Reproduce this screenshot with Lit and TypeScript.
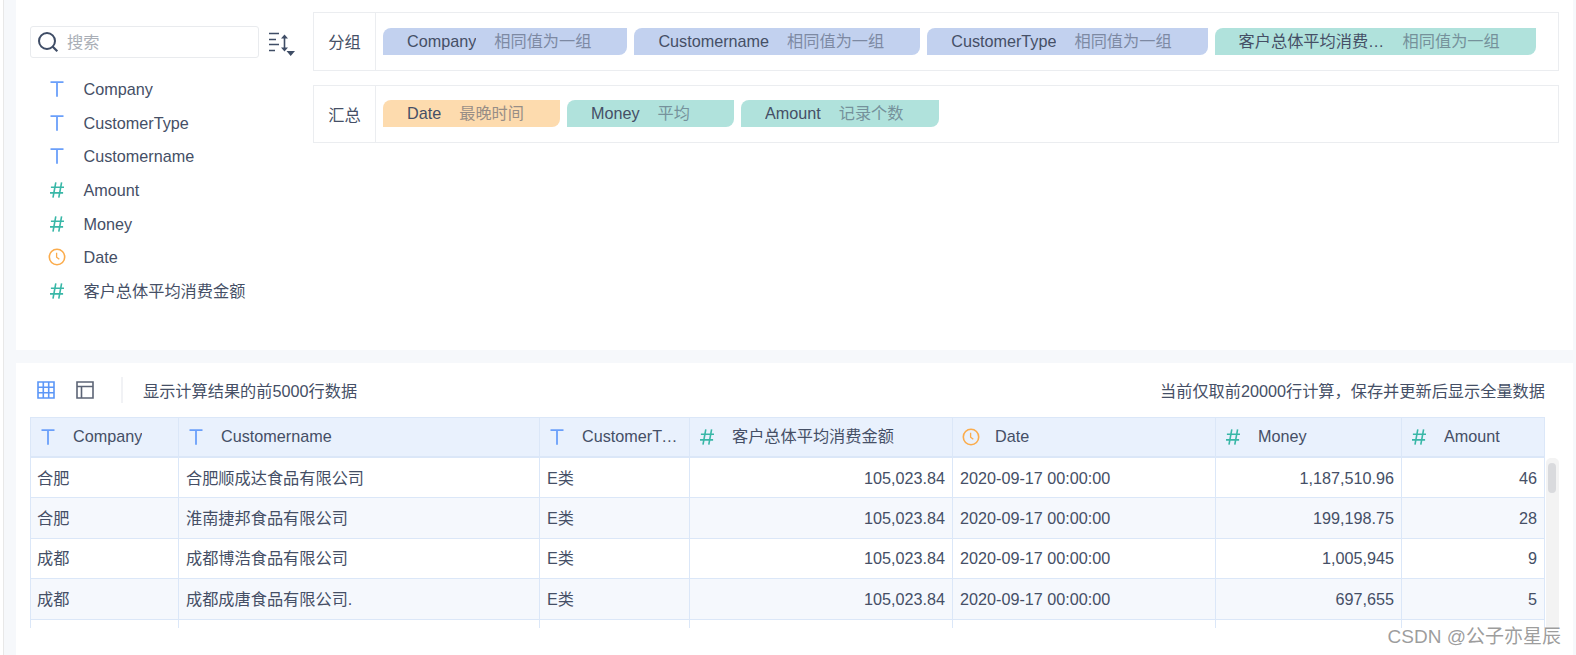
import { LitElement, html, css, svg } from 'lit';
import { customElement } from 'lit/decorators.js';

type FieldType = 'text' | 'num' | 'date';

const fieldIcon = (type: FieldType) => {
    if (type === 'text') {
        return html`<svg class="icon" width="14" height="16" viewBox="0 0 14 16">
            ${svg`<path d="M0.5 1.2H13.5M7 1.2V15.8" fill="none" stroke="#6a9ffa" stroke-width="1.8"/>`}
        </svg>`;
    }
    if (type === 'num') {
        return html`<svg class="icon" width="14" height="16" viewBox="0 0 14 16">
            ${svg`<path d="M5.8 0.3L3 15.7M11.6 0.3L8.8 15.7M0.9 5.2H14M0 10.9H13.1" fill="none" stroke="#38b7a7" stroke-width="1.6"/>`}
        </svg>`;
    }
    return html`<svg class="icon" width="18" height="18" viewBox="0 0 18 18">
        ${svg`<circle cx="9" cy="9" r="7.7" fill="none" stroke="#fbac4c" stroke-width="1.6"/>
        <path d="M8.6 4.8V9.2L11.3 11.3" fill="none" stroke="#fbac4c" stroke-width="1.3"/>`}
    </svg>`;
};

const fields: { name: string; type: FieldType }[] = [
    { name: 'Company', type: 'text' },
    { name: 'CustomerType', type: 'text' },
    { name: 'Customername', type: 'text' },
    { name: 'Amount', type: 'num' },
    { name: 'Money', type: 'num' },
    { name: 'Date', type: 'date' },
    { name: '客户总体平均消费金额', type: 'num' },
];

const groupChips = [
    { name: 'Company', sub: '相同值为一组', tone: 'blue' },
    { name: 'Customername', sub: '相同值为一组', tone: 'blue' },
    { name: 'CustomerType', sub: '相同值为一组', tone: 'blue' },
    { name: '客户总体平均消费金额', sub: '相同值为一组', tone: 'teal' },
];

const sumChips = [
    { name: 'Date', sub: '最晚时间', tone: 'orange' },
    { name: 'Money', sub: '平均', tone: 'teal wide' },
    { name: 'Amount', sub: '记录个数', tone: 'teal' },
];

const columns: { name: string; type: FieldType; right?: boolean }[] = [
    { name: 'Company', type: 'text' },
    { name: 'Customername', type: 'text' },
    { name: 'CustomerType', type: 'text' },
    { name: '客户总体平均消费金额', type: 'num', right: true },
    { name: 'Date', type: 'date' },
    { name: 'Money', type: 'num', right: true },
    { name: 'Amount', type: 'num', right: true },
];

const rows = [
    ['合肥', '合肥顺成达食品有限公司', 'E类', '105,023.84', '2020-09-17 00:00:00', '1,187,510.96', '46'],
    ['合肥', '淮南捷邦食品有限公司', 'E类', '105,023.84', '2020-09-17 00:00:00', '199,198.75', '28'],
    ['成都', '成都博浩食品有限公司', 'E类', '105,023.84', '2020-09-17 00:00:00', '1,005,945', '9'],
    ['成都', '成都成唐食品有限公司.', 'E类', '105,023.84', '2020-09-17 00:00:00', '697,655', '5'],
    ['', '', '', '', '', '', ''],
];

@customElement('app-root')
export class AppRoot extends LitElement {
    static styles = css`
        :host {
            display: block;
            height: 655px;
            overflow: hidden;
            position: relative;
            box-sizing: border-box;
            margin-left: 3px;
            padding: 0 3px 0 12px;
            background: #f6f8fb;
            border-left: 1px solid #e8e8e8;
            color: #454f66;
            font: 16.2px/20px "Liberation Sans", "Noto Sans CJK SC", sans-serif;
        }

        .top {
            display: flex;
            height: 350px;
            background: #fff;
            box-sizing: border-box;
            padding: 12px 14px 0;
        }

        .side {
            width: 283px;
            flex: none;
            padding-top: 14px;
        }

        .search-row {
            display: flex;
            align-items: center;
        }

        .search {
            width: 229px;
            height: 32px;
            box-sizing: border-box;
            display: flex;
            align-items: center;
            gap: 8px;
            padding-left: 6px;
            border: 1px solid #e9ebee;
            border-radius: 3px;
            color: #a9aeb6;
        }

        .sort {
            margin-left: 10px;
            margin-top: 5px;
        }

        .field-list {
            margin-top: 14.5px;
        }

        .field {
            height: 33.6px;
            display: flex;
            align-items: center;
            padding-left: 20px;
        }

        .field .slot {
            width: 33.5px;
            flex: none;
        }

        .icon {
            display: block;
        }

        .date-slot .icon {
            margin-left: -2px;
        }

        .zones {
            flex: 1;
            display: flex;
            flex-direction: column;
            gap: 14px;
        }

        .zone {
            height: 59px;
            box-sizing: border-box;
            display: flex;
            border: 1px solid #ebedf0;
        }

        .zone:last-child {
            height: 58px;
        }

        .zone:last-child .chips {
            padding-bottom: 1px;
        }

        .zone-label {
            width: 62px;
            flex: none;
            display: flex;
            align-items: center;
            justify-content: center;
            padding-top: 1px;
            box-sizing: border-box;
            border-right: 1px solid #ebedf0;
        }

        .chips {
            display: flex;
            align-items: center;
            gap: 7px;
            padding-left: 7px;
        }

        .chip {
            height: 27px;
            box-sizing: border-box;
            display: flex;
            align-items: center;
            gap: 18px;
            padding: 0 36px 1px 24px;
            border-radius: 8px 0 8px 0;
            white-space: nowrap;
        }

        .chip.blue {
            background: #c2d1ef;
        }

        .chip.teal {
            background: #b0e2dc;
        }

        .chip.orange {
            background: #fddbae;
        }

        .chip.wide {
            padding-right: 44px;
        }

        .chip-name {
            max-width: 146px;
            overflow: hidden;
            text-overflow: ellipsis;
        }

        .chip-sub {
            opacity: 0.55;
        }

        .bottom {
            height: 292px;
            margin-top: 13px;
            background: #fff;
            box-sizing: border-box;
            padding: 0 14px;
        }

        .toolbar {
            height: 54px;
            display: flex;
            align-items: center;
            width: 1515px;
        }

        .toolbar svg {
            display: block;
        }

        .toolbar .grid {
            margin-left: 7px;
        }

        .toolbar .layout {
            margin-left: 21px;
        }

        .toolbar span {
            margin-top: 2px;
        }

        .divider {
            width: 2px;
            height: 26px;
            margin: 0 20px 0 27px;
            background: #f1f2f5;
        }

        .toolbar .note {
            margin-left: auto;
        }

        .table-wrap {
            display: flex;
        }

        .table {
            width: 1515px;
            height: 211px;
            overflow: hidden;
            flex: none;
        }

        .row {
            display: grid;
            grid-template-columns: 149px 361px 150px 263px 263px 186px 143px;
            height: 40.4px;
        }

        .row:nth-child(odd) {
            background: #f5f8fd;
        }

        .row.head {
            height: 41px;
            background: #e9f1fd;
        }

        .cell {
            min-width: 0;
            box-sizing: border-box;
            display: flex;
            align-items: center;
            padding: 0 7px;
            border-right: 1px solid #dbe7f8;
            border-bottom: 1px solid #dbe7f8;
            white-space: nowrap;
        }

        .cell:first-child {
            padding-left: 6px;
            border-left: 1px solid #dbe7f8;
        }

        .cell.right {
            justify-content: flex-end;
        }

        .head .cell {
            border-top: 1px solid #dbe7f8;
            border-bottom: 2px solid #dbe7f8;
            padding: 0 7px 0 10px;
        }

        .head .slot {
            width: 32px;
            flex: none;
        }

        .head .date-slot .icon {
            margin-left: -1px;
        }

        .head-name {
            overflow: hidden;
            text-overflow: ellipsis;
            margin-bottom: 2px;
        }

        .scrollbar {
            width: 13px;
            height: 170px;
            margin: 41px 0 0 1px;
            flex: none;
            box-sizing: border-box;
            padding: 5px 3px 0 2px;
            background: #f3f3f3;
            border-radius: 5px 5px 0 0;
        }

        .thumb {
            height: 30px;
            background: #d9dadd;
            border-radius: 4px;
        }

        .watermark {
            position: absolute;
            right: 15px;
            top: 626px;
            font-size: 19px;
            line-height: 22px;
            color: rgba(140, 140, 140, 0.85);
            text-shadow: 0 0 2px #fff;
        }
    `;

    private renderChip(chip: { name: string; sub: string; tone: string }) {
        return html`<div class="chip ${chip.tone}">
            <span class="chip-name">${chip.name}</span>
            <span class="chip-sub">${chip.sub}</span>
        </div>`;
    }

    render() {
        return html`
            <div class="top">
                <div class="side">
                    <div class="search-row">
                        <div class="search">
                            <svg width="22" height="22" viewBox="0 0 22 22">
                                <circle cx="10" cy="10" r="8" fill="none" stroke="#3f4d66" stroke-width="2"/>
                                <path d="M15.5 15.5L20.3 20.3" stroke="#3f4d66" stroke-width="2.2"/>
                            </svg>
                            <span>搜索</span>
                        </div>
                        <svg class="sort" width="26" height="25" viewBox="0 0 26 25">
                            <path d="M0 1.5H10M0 7.5H7M0 12.5H10M0 18.5H6" stroke="#3f4d66" stroke-width="1.6" fill="none"/>
                            <path d="M15.5 4V18" stroke="#3f4d66" stroke-width="1.6" fill="none"/>
                            <path d="M12 6.5L15.5 2.5L19 6.5ZM12 15.5L15.5 19.5L19 15.5ZM17.5 19H26L21.7 24Z" fill="#3f4d66"/>
                        </svg>
                    </div>
                    <div class="field-list">
                        ${fields.map(f => html`<div class="field">
                            <span class="slot ${f.type === 'date' ? 'date-slot' : ''}">${fieldIcon(f.type)}</span>
                            <span>${f.name}</span>
                        </div>`)}
                    </div>
                </div>
                <div class="zones">
                    <div class="zone">
                        <div class="zone-label">分组</div>
                        <div class="chips">${groupChips.map(c => this.renderChip(c))}</div>
                    </div>
                    <div class="zone">
                        <div class="zone-label">汇总</div>
                        <div class="chips">${sumChips.map(c => this.renderChip(c))}</div>
                    </div>
                </div>
            </div>
            <div class="bottom">
                <div class="toolbar">
                    <svg class="grid" width="18" height="18" viewBox="0 0 18 18">
                        <path d="M1 1H17V17H1ZM6.3 1V17M11.7 1V17M1 6.3H17M1 11.7H17" fill="none" stroke="#5b96f7" stroke-width="1.6"/>
                    </svg>
                    <svg class="layout" width="18" height="18" viewBox="0 0 18 18">
                        <path d="M1 1H17V17H1ZM1 5.5H17M5.5 5.5V17" fill="none" stroke="#5c6476" stroke-width="1.6"/>
                    </svg>
                    <div class="divider"></div>
                    <span>显示计算结果的前5000行数据</span>
                    <span class="note">当前仅取前20000行计算，保存并更新后显示全量数据</span>
                </div>
                <div class="table-wrap">
                    <div class="table">
                        <div class="row head">
                            ${columns.map(c => html`<div class="cell">
                                <span class="slot ${c.type === 'date' ? 'date-slot' : ''}">${fieldIcon(c.type)}</span>
                                <span class="head-name">${c.name}</span>
                            </div>`)}
                        </div>
                        ${rows.map(r => html`<div class="row">
                            ${r.map((value, i) => html`<div class="cell ${columns[i].right ? 'right' : ''}">${value}</div>`)}
                        </div>`)}
                    </div>
                    <div class="scrollbar"><div class="thumb"></div></div>
                </div>
            </div>
            <div class="watermark">CSDN @公子亦星辰</div>
        `;
    }
}
